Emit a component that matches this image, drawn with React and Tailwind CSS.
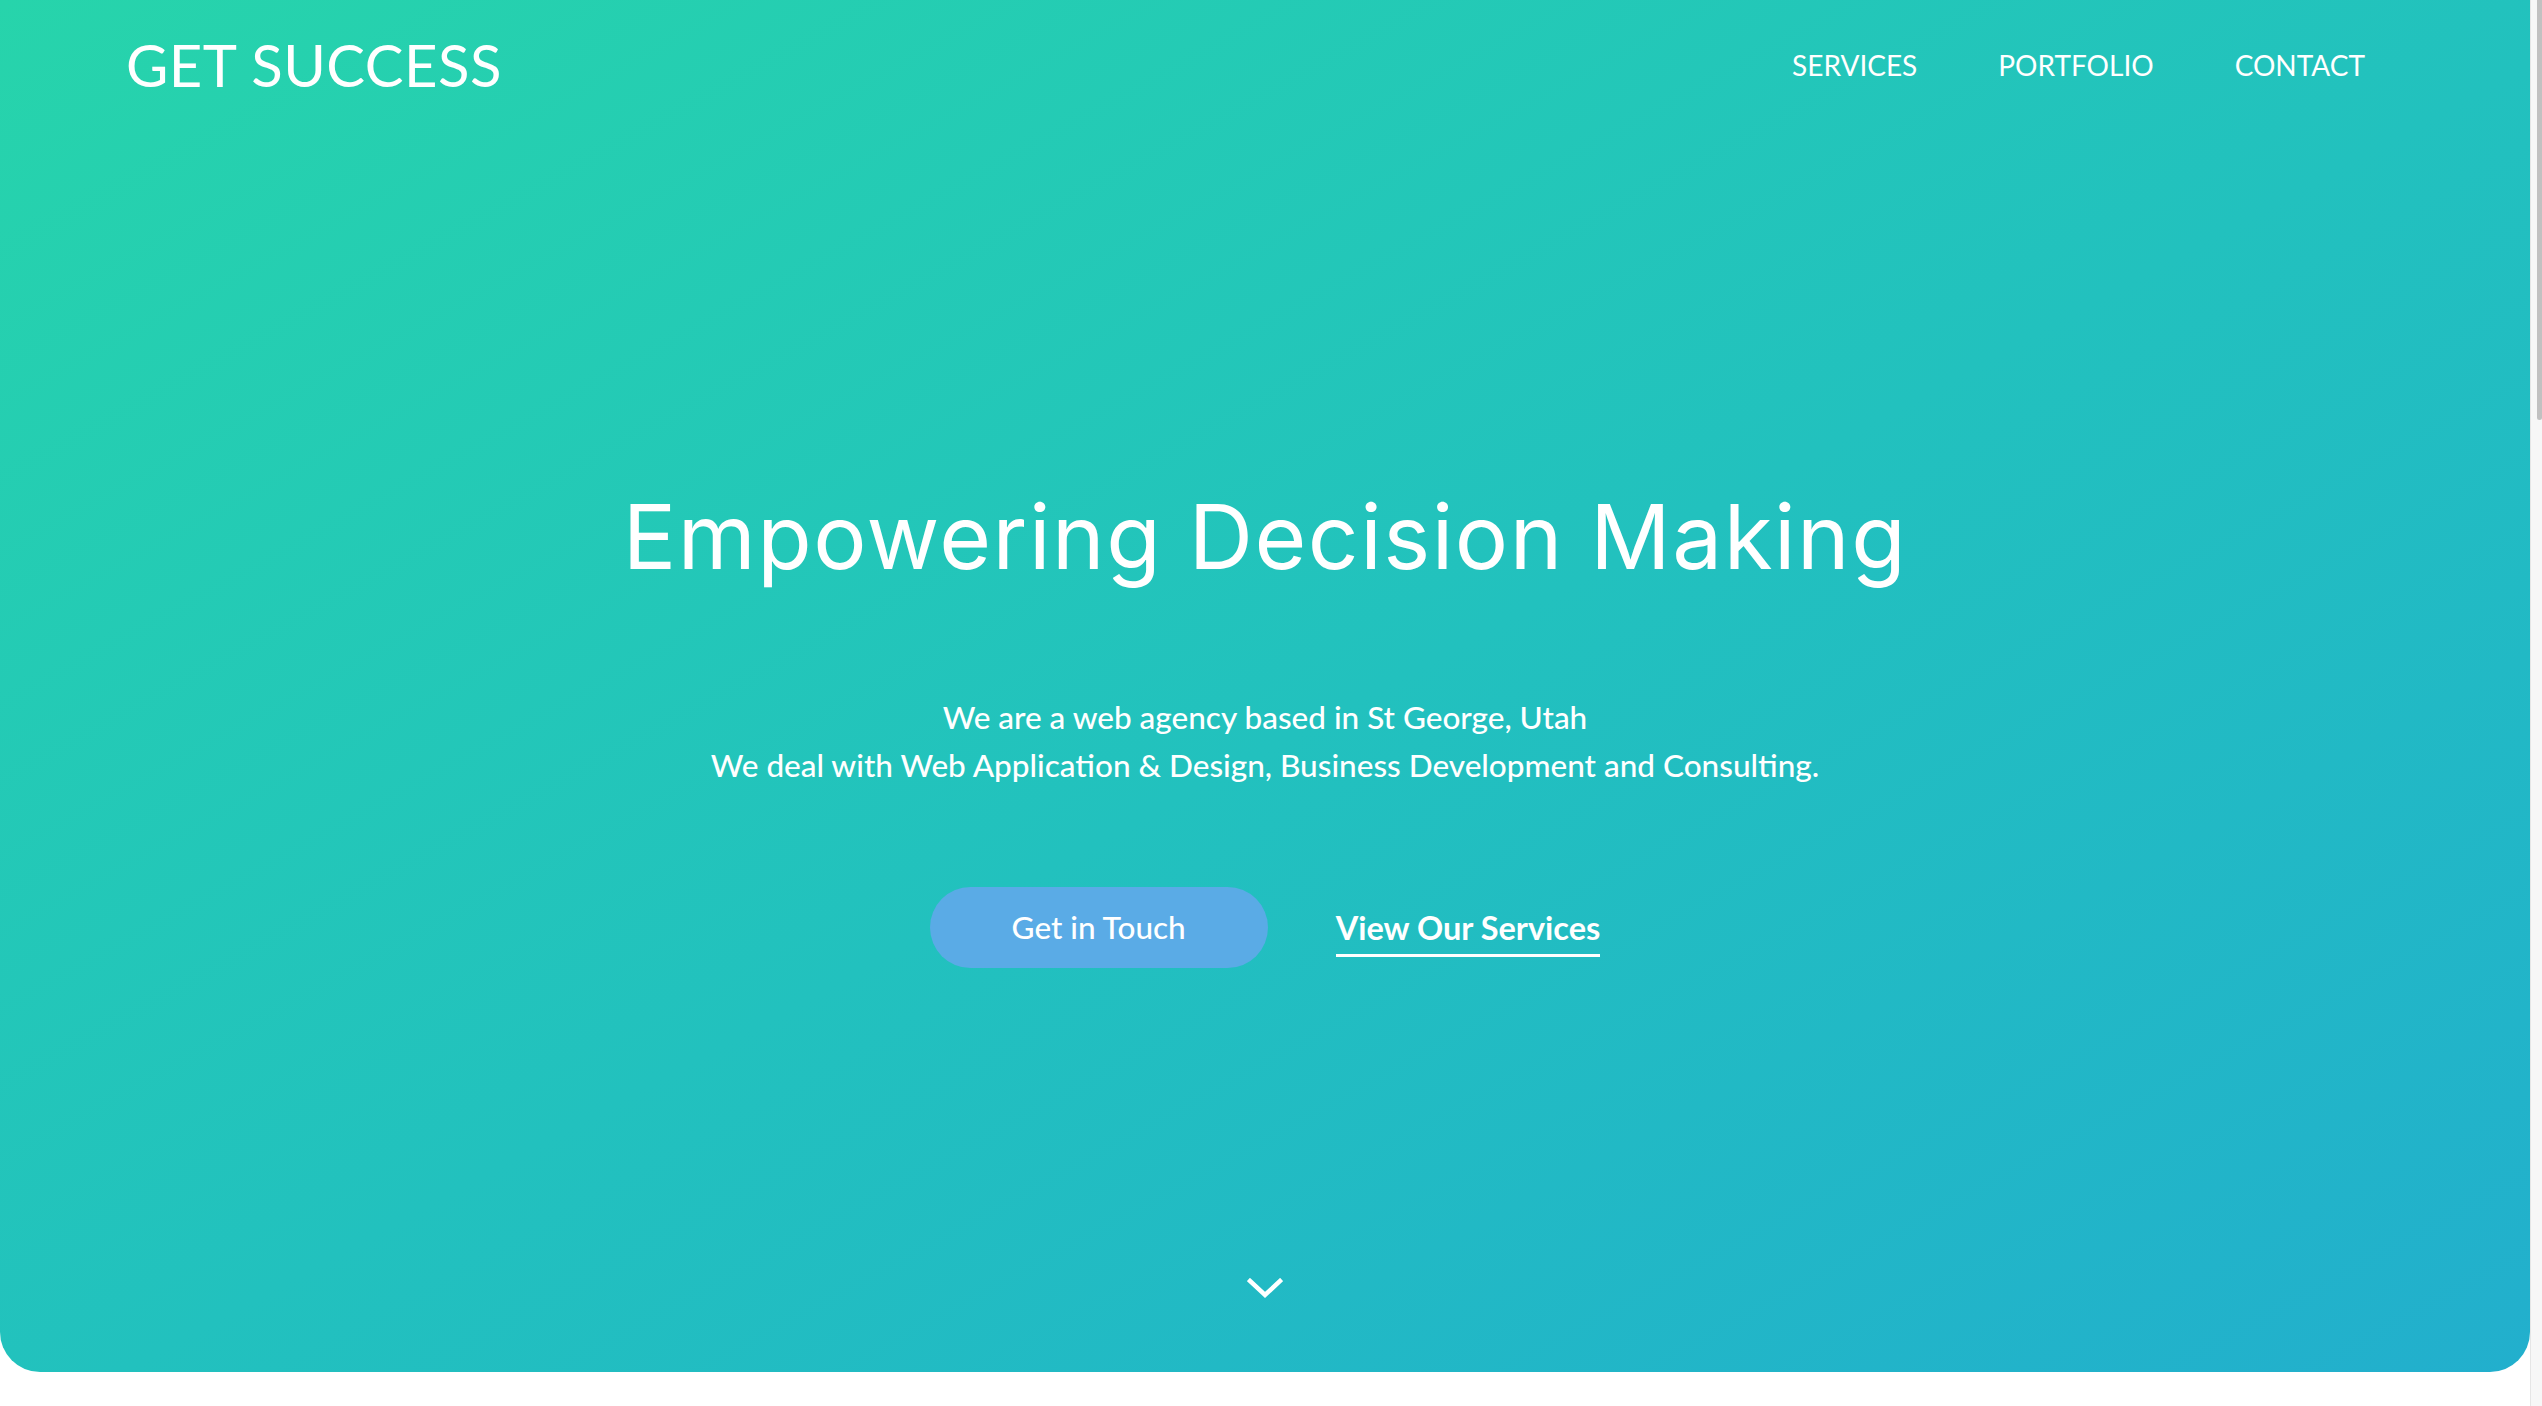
import React from 'react';

// Top navigation links
const links = ['SERVICES', 'PORTFOLIO', 'CONTACT'];

function ChevronDown() {
  return (
    <svg width="36" height="22" viewBox="0 0 36 22" fill="none">
      <polyline
        points="3,3 18,17 33,3"
        stroke="white"
        strokeWidth="4.5"
        strokeLinecap="square"
        strokeLinejoin="miter"
      />
    </svg>
  );
}

export default function App() {
  return (
    <div className="flex w-full h-[1406px] bg-white overflow-hidden">
      <div className="flex-1 min-w-0">
        <section className="h-[1372px] rounded-b-[40px] bg-linear-to-br from-[#27d4ab] to-[#22afcd] text-white flex flex-col font-['Lato',sans-serif]">
          <header className="h-[130px] flex items-center justify-between pl-[126px] pr-[165px]">
            <div className="text-[58px] leading-none tracking-[0.5px]">GET SUCCESS</div>
            <nav className="flex items-center gap-[81px]">
              {links.map((l) => (
                <a key={l} href="#" className="text-[28px] leading-none">
                  {l}
                </a>
              ))}
            </nav>
          </header>

          <div className="flex flex-col items-center pt-[348px]">
            <h1 className="font-['Inter',sans-serif] font-normal text-[89px] leading-[118px] tracking-[1.5px]">
              Empowering Decision Making
            </h1>
            <p className="mt-[97px] text-[31.5px] leading-[48px] text-center font-medium">
              We are a web agency based in St George, Utah
              <br />
              We deal with Web Application &amp; Design, Business Development and Consulting.
            </p>
            <div className="mt-[98px] flex items-center gap-[68px]">
              <button className="w-[338px] h-[81px] rounded-full bg-[#5aabe6] text-[31.5px] font-medium">
                Get in Touch
              </button>
              <a href="#" className="mt-[9px] text-[32.5px] font-bold leading-[40px] border-b-[3px] border-white pb-[6px]">
                View Our Services
              </a>
            </div>
            <div className="mt-[310px]">
              <ChevronDown />
            </div>
          </div>
        </section>
      </div>
      <div className="w-[12px] bg-[#f7f7f7] border-l border-[#e6e6e6] flex justify-end">
        <div className="w-[5px] h-[420px] bg-[#c1c1c1] rounded-b-[3px]" />
      </div>
    </div>
  );
}
